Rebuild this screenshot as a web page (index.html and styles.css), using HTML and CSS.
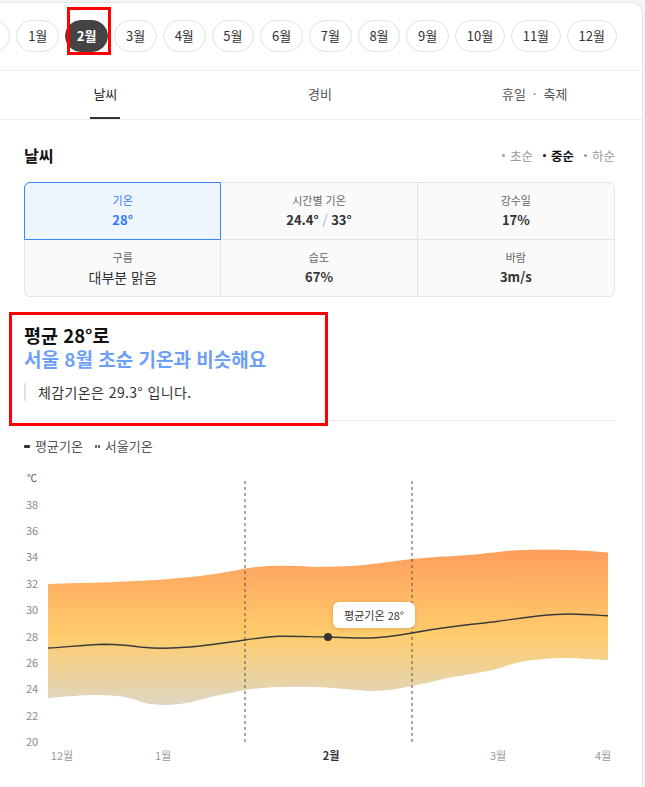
FILE: index.html
```html
<!DOCTYPE html>
<html lang="ko">
<head>
<meta charset="utf-8">
<title>날씨</title>
<link rel="stylesheet" href="styles.css">
</head>
<body>
<div class="card">
  <div class="months">
    <div class="chips">
      <span class="chip">12월</span>
      <span class="chip">1월</span>
      <span class="chip active">2월</span>
      <span class="chip">3월</span>
      <span class="chip">4월</span>
      <span class="chip">5월</span>
      <span class="chip">6월</span>
      <span class="chip">7월</span>
      <span class="chip">8월</span>
      <span class="chip">9월</span>
      <span class="chip">10월</span>
      <span class="chip">11월</span>
      <span class="chip">12월</span>
    </div>
  </div>
  <nav class="tabs">
    <div class="tab active"><span>날씨</span></div>
    <div class="tab"><span>경비</span></div>
    <div class="tab"><span>휴일<b class="dot">·</b>축제</span></div>
  </nav>
  <section class="content">
    <div class="head">
      <h2>날씨</h2>
      <div class="periods">
        <span class="period">초순</span>
        <span class="period on">중순</span>
        <span class="period">하순</span>
      </div>
    </div>
    <div class="stats">
      <div class="stat active"><span class="lbl">기온</span><span class="val">28°</span></div>
      <div class="stat"><span class="lbl">시간별 기온</span><span class="val">24.4° <i class="sl">/</i> 33°</span></div>
      <div class="stat"><span class="lbl">강수일</span><span class="val">17%</span></div>
      <div class="stat"><span class="lbl">구름</span><span class="val big">대부분 맑음</span></div>
      <div class="stat"><span class="lbl">습도</span><span class="val">67%</span></div>
      <div class="stat"><span class="lbl">바람</span><span class="val">3m/s</span></div>
    </div>
    <div class="summary">
      <h3>평균 28°로</h3>
      <p class="hl">서울 8월 초순 기온과 비슷해요</p>
      <p class="feel">체감기온은 29.3° 입니다.</p>
    </div>
    <div class="divider"></div>
    <div class="legend">
      <span class="lg"><i class="ic-avg"></i>평균기온</span>
      <span class="lg"><i class="ic-seoul"><b></b><b></b></i>서울기온</span>
    </div>
    <div class="chart">
      <svg width="591" height="310" viewBox="24 465 591 310" xmlns="http://www.w3.org/2000/svg">
        <defs>
          <linearGradient id="band" gradientUnits="userSpaceOnUse" x1="0" y1="550" x2="0" y2="708">
            <stop offset="0" stop-color="#fe9d5d"/>
            <stop offset="0.55" stop-color="#ffcd6c"/>
            <stop offset="1" stop-color="#ddd6c6"/>
          </linearGradient>
        </defs>
        <g class="ylab">
          <text x="27" y="483" class="unit">℃</text>
          <text x="26" y="510">38</text>
          <text x="26" y="536">36</text>
          <text x="26" y="562">34</text>
          <text x="26" y="589">32</text>
          <text x="26" y="615">30</text>
          <text x="26" y="642">28</text>
          <text x="26" y="668">26</text>
          <text x="26" y="694">24</text>
          <text x="26" y="721">22</text>
          <text x="26" y="747">20</text>
        </g>
        <path fill="url(#band)" d="M48 585 C70 584 85 584 100 583.5 C125 582.5 145 581.5 163 580.5 C180 579 190 578 200 577 C220 574.5 232 572 245 569.5 C262 567 275 566.5 290 566.8 C300 567 308 567.8 315 568 C330 568 342 567.5 355 566.8 C380 564.5 395 562 412 560 C440 557.5 455 557 475 555.5 C495 553.5 505 552 520 551 C540 550.5 555 550.5 570 551 C585 551.5 597 552.5 608 553.5 L608 661 C590 660 575 659 560 659 C545 659.5 532 661 520 663 C508 666 500 669 495 670.5 C478 674 465 676 450 678.5 C435 682 425 684.5 412 687 C398 690 385 692 370 692 C358 691.5 352 690.5 345 690 C333 689 325 688.2 315 688 C300 687.8 290 687.8 280 688 C265 688.5 255 689.5 245 691 C230 694 220 696 210 698 C198 701.5 190 703.5 183 704.5 C175 705.5 168 706 163 706 C152 705.8 146 704.5 140 702.5 C130 699 124 697.5 117 697 C105 696 95 696 85 696.2 C70 697 58 698 48 699 Z"/>
        <line class="dash" x1="245" y1="482" x2="245" y2="745"/>
        <line class="dash" x1="412" y1="482" x2="412" y2="745"/>
        <path class="mean" d="M48 649 C65 648 85 646 105 645.3 C120 645.5 132 647 140 648 C150 649 157 649.3 163 649.3 C180 649 190 648 200 647 C220 644.5 232 643 245 641 C258 639 268 637.5 280 637.2 C295 637 312 637.8 328 638 C345 638.5 358 639.2 370 639 C385 638.5 395 637 412 634 C425 631.5 438 629.5 450 628 C465 626 480 624.5 495 622.8 C510 620.5 525 618.5 540 616.8 C552 615.5 562 615 570 615 C585 615.3 597 616.2 608 616.8"/>
        <circle cx="328" cy="638" r="4" fill="#333"/>
        <g class="xlab">
          <text x="62" y="761">12월</text>
          <text x="163" y="761">1월</text>
          <text x="331" y="761" class="cur">2월</text>
          <text x="498" y="761">3월</text>
          <text x="603" y="761">4월</text>
        </g>
      </svg>
      <div class="tooltip">평균기온 28°</div>
    </div>
  </section>
</div>
<div class="mark mark-chip"></div>
<div class="mark mark-summary"></div>
</body>
</html>
```
FILE: styles.css
```css
* { box-sizing: border-box; margin: 0; padding: 0; }
html, body { height: 100%; }
body {
  background: #f3f3f3;
  font-family: "Noto Sans CJK KR", "Noto Sans", sans-serif;
  color: #333;
  overflow: hidden;
  position: relative;
}
.card {
  margin: 2px 0 0 -2px;
  width: 645px;
  min-height: 790px;
  background: #fff;
  border-top: 1px solid #e6e6e6;
  border-right: 1px solid #e6e6e6;
  border-top-right-radius: 12px;
}
.months {
  padding: 17px 0 18px;
  border-bottom: 1px solid #ececec;
  overflow: hidden;
}
.chips {
  display: flex;
  gap: 6px;
  margin-left: -37.5px;
}
.chip {
  flex: none;
  height: 32px;
  padding: 0 10.75px;
  border: 1px solid #e3e3e3;
  border-radius: 16px;
  font-size: 13px;
  line-height: 30px;
  color: #333;
  white-space: nowrap;
}
.chip.active {
  background: #444;
  border-color: #444;
  color: #fff;
  font-weight: 700;
}
.tabs {
  display: flex;
  height: 49px;
  border-bottom: 1px solid #ececec;
}
.tab {
  flex: 1;
  display: flex;
  justify-content: center;
  font-size: 13px;
  color: #555;
}
.tab span {
  display: block;
  height: 48px;
  line-height: 46px;
  padding: 0 3px;
}
.tab.active span {
  color: #222;
  border-bottom: 2px solid #333;
}
.tab .dot {
  font-weight: 400;
  margin: 0 7px;
  color: #777;
}
.content {
  padding: 0 27px 0 26px;
}
.head {
  margin-top: 24px;
  display: flex;
  justify-content: space-between;
  align-items: center;
  height: 22px;
}
.head h2 {
  font-size: 16px;
  font-weight: 700;
  color: #111;
  line-height: 22px;
}
.periods {
  display: flex;
  gap: 10px;
  font-size: 12.5px;
  color: #999;
}
.period {
  display: flex;
  align-items: center;
  gap: 5px;
}
.period::before {
  content: "";
  width: 3px;
  height: 3px;
  border-radius: 50%;
  background: currentColor;
}
.period.on {
  color: #111;
  font-weight: 700;
}
.stats {
  margin-top: 16px;
  display: grid;
  grid-template-columns: repeat(3, 1fr);
  border: 1px solid #e5e5e5;
  border-radius: 6px;
  background: #fafafa;
}
.stat {
  height: 57px;
  padding-top: 9px;
  display: flex;
  flex-direction: column;
  align-items: center;
  gap: 4px;
  border-right: 1px solid #e5e5e5;
  border-bottom: 1px solid #e5e5e5;
}
.stat:nth-child(3n) { border-right: 0; }
.stat:nth-child(n+4) { border-bottom: 0; height: 56px; }
.stat:nth-child(4) { border-bottom-left-radius: 6px; }
.stat.active {
  position: relative;
  background: #eef5ff;
  border-top-left-radius: 6px;
}
.stat.active::after {
  content: "";
  position: absolute;
  inset: -1px;
  border: 1px solid #3a86f7;
  border-top-left-radius: 6px;
}
.lbl {
  font-size: 11px;
  line-height: 16px;
  color: #666;
}
.val {
  font-size: 13px;
  line-height: 16px;
  font-weight: 700;
  color: #333;
}
.val.big {
  font-size: 14px;
  font-weight: 400;
}
.val .sl {
  font-style: normal;
  font-weight: 400;
  color: #aaa;
}
.stat.active .lbl,
.stat.active .val { color: #2f7bf5; }
.summary {
  margin-top: 26px;
}
.summary h3 {
  font-size: 18.5px;
  line-height: 24px;
  font-weight: 700;
  color: #111;
}
.summary .hl {
  font-size: 19px;
  line-height: 24px;
  font-weight: 700;
  color: #6e9ff8;
}
.summary .feel {
  margin-top: 12px;
  border-left: 2px solid #e0e0e0;
  padding-left: 12px;
  font-size: 14px;
  letter-spacing: 0.4px;
  line-height: 18px;
  color: #333;
}
.divider {
  margin-top: 19px;
  border-top: 1px solid #eee;
}
.legend {
  margin-top: 16px;
  display: flex;
  gap: 12px;
  font-size: 13px;
  line-height: 18px;
  color: #555;
}
.lg {
  display: flex;
  align-items: center;
  gap: 5px;
}
.ic-avg {
  width: 6px;
  height: 3px;
  border-radius: 1px;
  background: #333;
}
.ic-seoul {
  display: flex;
  gap: 1px;
}
.ic-seoul b {
  width: 2px;
  height: 3px;
  background: #666;
}
.chart {
  margin-top: 9px;
  position: relative;
  height: 310px;
}
.chart svg {
  display: block;
  overflow: visible;
}
.ylab text {
  font-size: 11px;
  fill: #888;
  font-family: "Noto Sans CJK KR", "Noto Sans", sans-serif;
}
.ylab .unit {
  font-size: 10px;
  fill: #555;
}
.dash {
  stroke: #555;
  stroke-width: 1;
  stroke-dasharray: 3 3;
}
.mean {
  fill: none;
  stroke: #3a3a3a;
  stroke-width: 1.4;
}
.xlab text {
  font-size: 11px;
  fill: #999;
  text-anchor: middle;
  font-family: "Noto Sans CJK KR", "Noto Sans", sans-serif;
}
.xlab .cur {
  fill: #333;
  font-weight: 700;
}
.tooltip {
  position: absolute;
  left: 309px;
  top: 138px;
  width: 82px;
  height: 26px;
  background: #fff;
  border-radius: 6px;
  box-shadow: 0 1px 4px rgba(0, 0, 0, 0.15);
  font-size: 11px;
  line-height: 26px;
  text-align: center;
  color: #333;
}
.mark {
  position: absolute;
  border: 3px solid #ff0000;
  pointer-events: none;
}
.mark-chip {
  left: 67px;
  top: 7px;
  width: 44px;
  height: 48px;
}
.mark-summary {
  left: 9px;
  top: 312px;
  width: 319px;
  height: 114px;
}
```
